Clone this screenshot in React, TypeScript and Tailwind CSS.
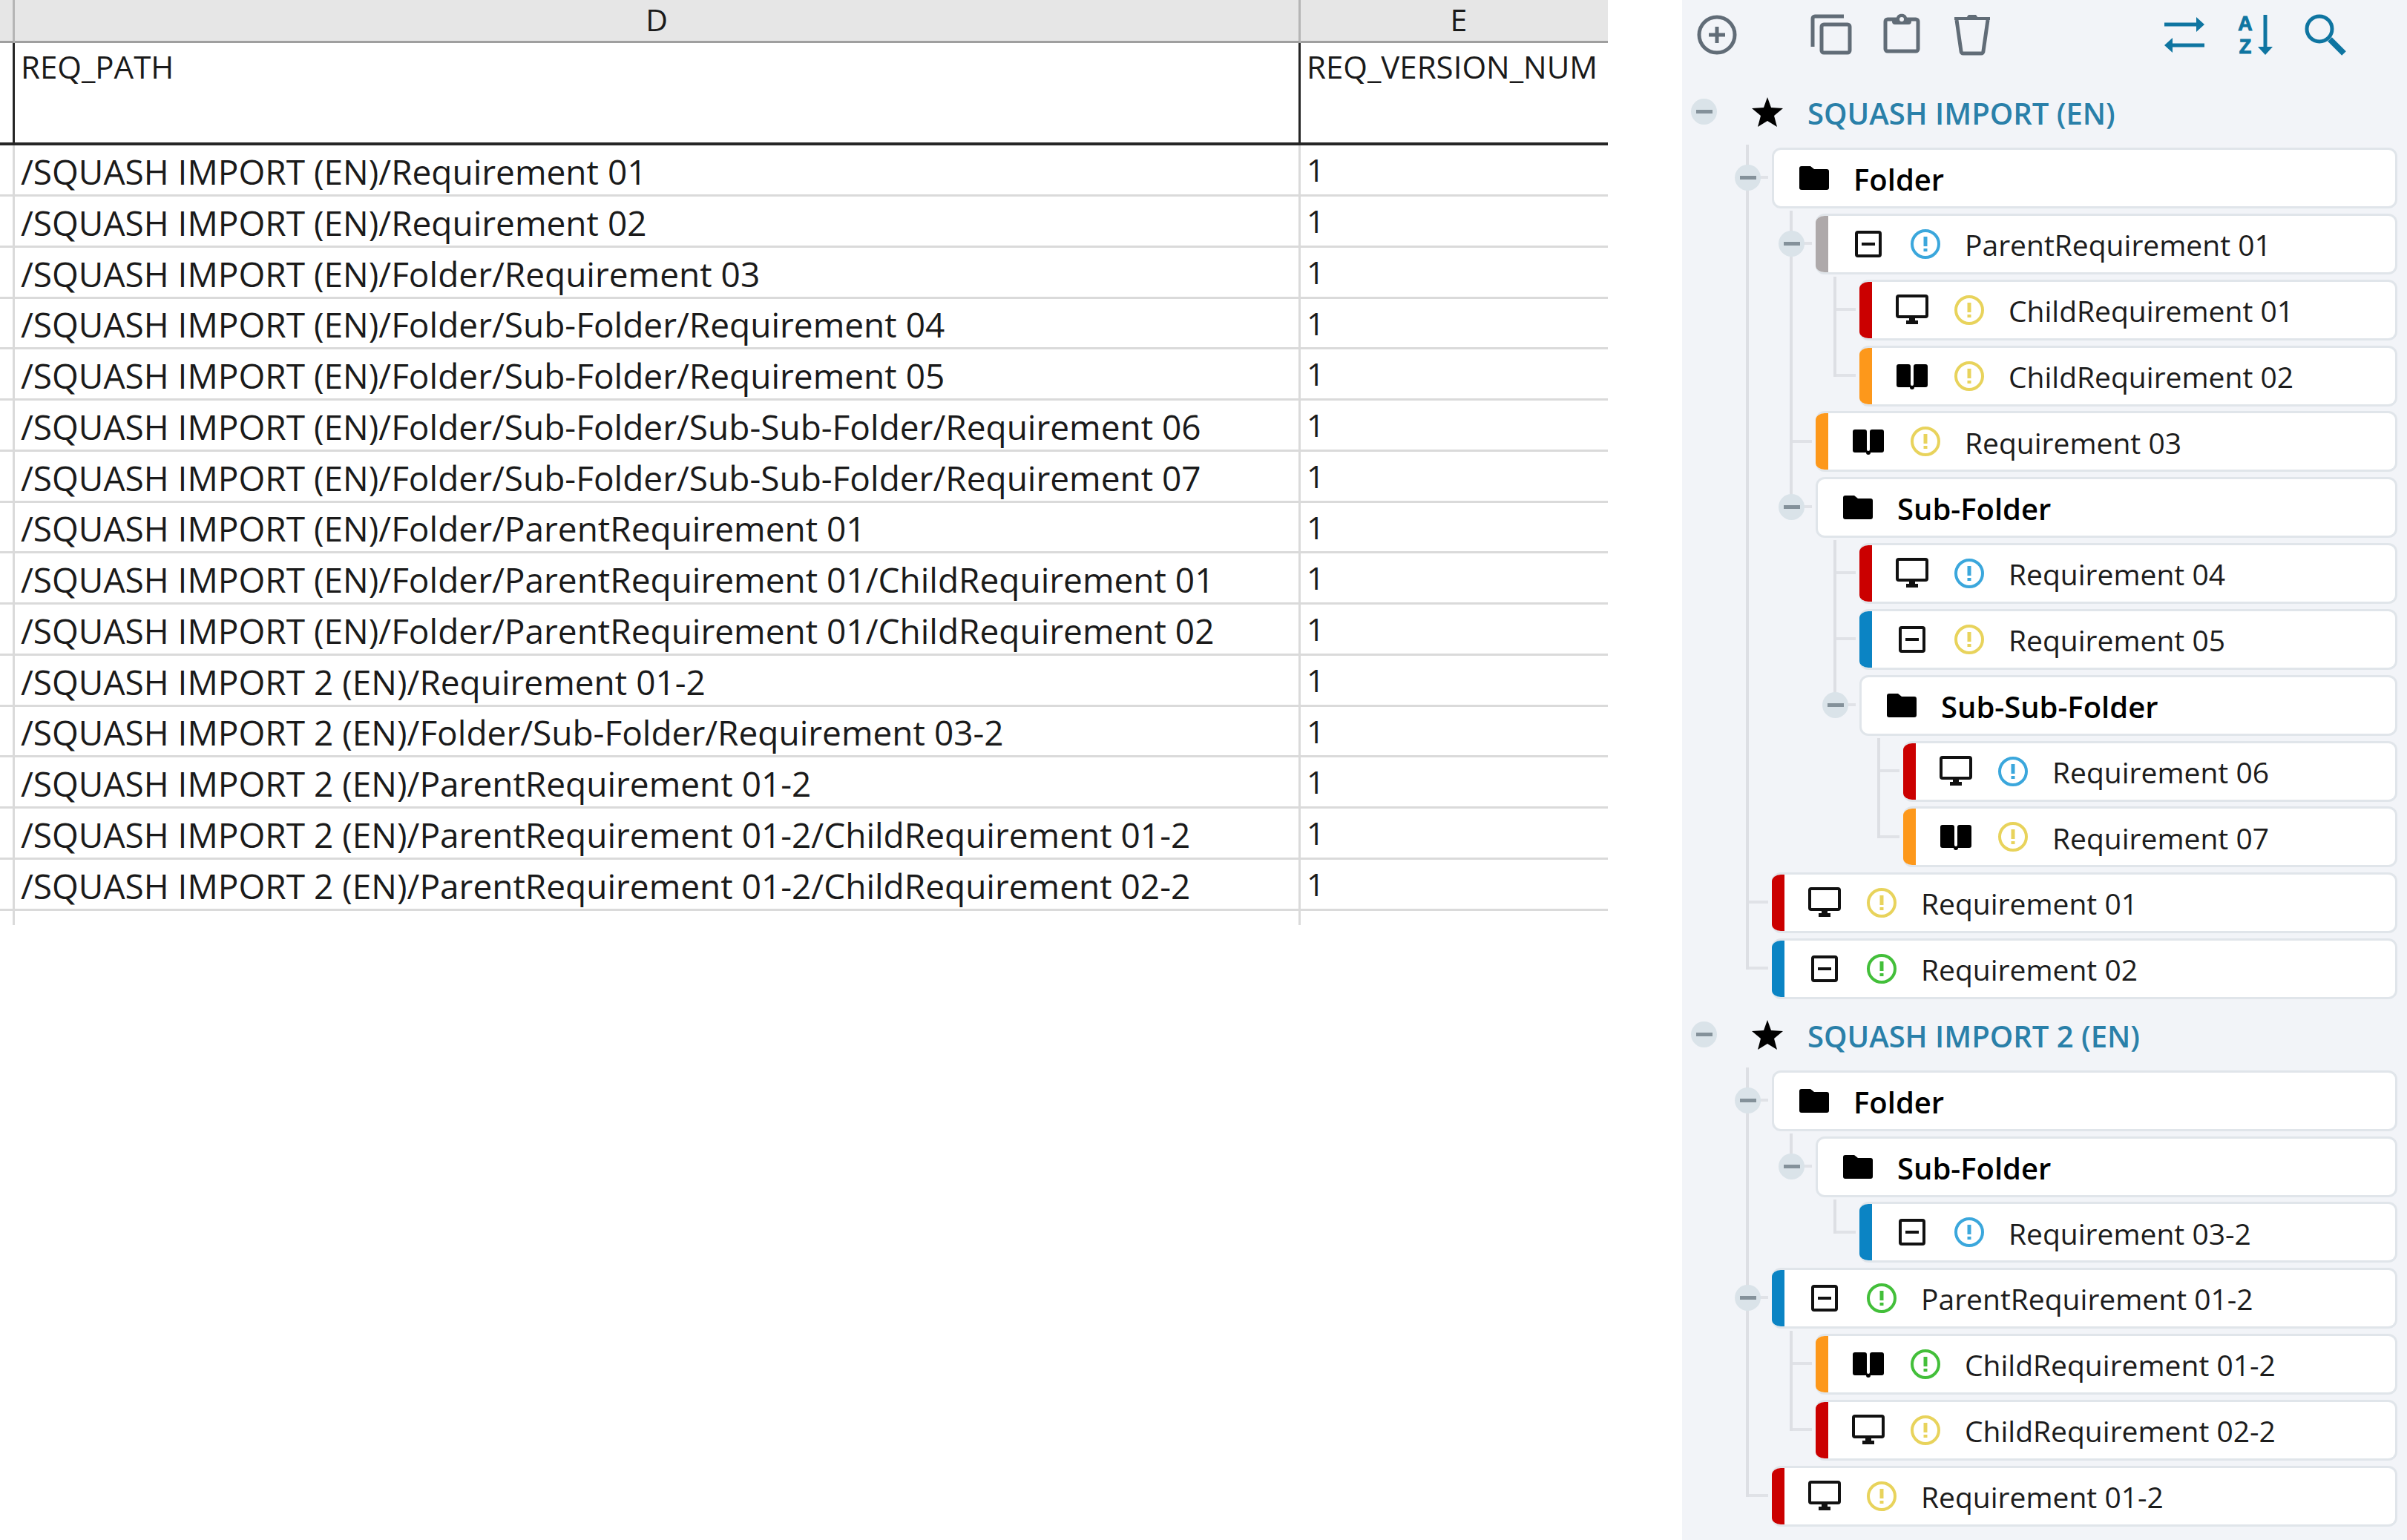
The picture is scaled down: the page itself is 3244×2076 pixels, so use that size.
import React from "react";
import clsx from "clsx";

type Kind = "folder" | "monitor" | "book" | "box";
type Criticality = "grey" | "red" | "orange" | "blue";
type Status = "cyan" | "yellow" | "green";

interface TreeNode {
  label: string;
  kind: Kind;
  bar?: Criticality;
  status?: Status;
  children?: TreeNode[];
}

interface Library {
  name: string;
  children: TreeNode[];
}

type Guide = "empty" | "line" | "tee" | "corner";

interface FlatRow {
  id: string;
  label: string;
  guides: Guide[];
  node?: TreeNode;
  open: boolean;
}

const paths = [
  "/SQUASH IMPORT (EN)/Requirement 01",
  "/SQUASH IMPORT (EN)/Requirement 02",
  "/SQUASH IMPORT (EN)/Folder/Requirement 03",
  "/SQUASH IMPORT (EN)/Folder/Sub-Folder/Requirement 04",
  "/SQUASH IMPORT (EN)/Folder/Sub-Folder/Requirement 05",
  "/SQUASH IMPORT (EN)/Folder/Sub-Folder/Sub-Sub-Folder/Requirement 06",
  "/SQUASH IMPORT (EN)/Folder/Sub-Folder/Sub-Sub-Folder/Requirement 07",
  "/SQUASH IMPORT (EN)/Folder/ParentRequirement 01",
  "/SQUASH IMPORT (EN)/Folder/ParentRequirement 01/ChildRequirement 01",
  "/SQUASH IMPORT (EN)/Folder/ParentRequirement 01/ChildRequirement 02",
  "/SQUASH IMPORT 2 (EN)/Requirement 01-2",
  "/SQUASH IMPORT 2 (EN)/Folder/Sub-Folder/Requirement 03-2",
  "/SQUASH IMPORT 2 (EN)/ParentRequirement 01-2",
  "/SQUASH IMPORT 2 (EN)/ParentRequirement 01-2/ChildRequirement 01-2",
  "/SQUASH IMPORT 2 (EN)/ParentRequirement 01-2/ChildRequirement 02-2",
];

const libraries: Library[] = [
  {
    name: "SQUASH IMPORT (EN)",
    children: [
      {
        label: "Folder",
        kind: "folder",
        children: [
          {
            label: "ParentRequirement 01",
            kind: "box",
            bar: "grey",
            status: "cyan",
            children: [
              { label: "ChildRequirement 01", kind: "monitor", bar: "red", status: "yellow" },
              { label: "ChildRequirement 02", kind: "book", bar: "orange", status: "yellow" },
            ],
          },
          { label: "Requirement 03", kind: "book", bar: "orange", status: "yellow" },
          {
            label: "Sub-Folder",
            kind: "folder",
            children: [
              { label: "Requirement 04", kind: "monitor", bar: "red", status: "cyan" },
              { label: "Requirement 05", kind: "box", bar: "blue", status: "yellow" },
              {
                label: "Sub-Sub-Folder",
                kind: "folder",
                children: [
                  { label: "Requirement 06", kind: "monitor", bar: "red", status: "cyan" },
                  { label: "Requirement 07", kind: "book", bar: "orange", status: "yellow" },
                ],
              },
            ],
          },
        ],
      },
      { label: "Requirement 01", kind: "monitor", bar: "red", status: "yellow" },
      { label: "Requirement 02", kind: "box", bar: "blue", status: "green" },
    ],
  },
  {
    name: "SQUASH IMPORT 2 (EN)",
    children: [
      {
        label: "Folder",
        kind: "folder",
        children: [
          {
            label: "Sub-Folder",
            kind: "folder",
            children: [{ label: "Requirement 03-2", kind: "box", bar: "blue", status: "cyan" }],
          },
        ],
      },
      {
        label: "ParentRequirement 01-2",
        kind: "box",
        bar: "blue",
        status: "green",
        children: [
          { label: "ChildRequirement 01-2", kind: "book", bar: "orange", status: "green" },
          { label: "ChildRequirement 02-2", kind: "monitor", bar: "red", status: "yellow" },
        ],
      },
      { label: "Requirement 01-2", kind: "monitor", bar: "red", status: "yellow" },
    ],
  },
];

const barColors: Record<Criticality, string> = {
  grey: "bg-[#aea9aa]",
  red: "bg-[#cb0000]",
  orange: "bg-[#fd981b]",
  blue: "bg-[#0b84c4]",
};

const statusColors: Record<Status, string> = {
  cyan: "text-[#3ba7dc]",
  yellow: "text-[#e8d35c]",
  green: "text-[#43bf3a]",
};

function flatten(nodes: TreeNode[], parents: Guide[], prefix: string): FlatRow[] {
  return nodes.flatMap((node, i) => {
    const last = i === nodes.length - 1;
    const id = `${prefix}/${node.label}`;
    return [
      { id, label: node.label, node, open: !!node.children, guides: [...parents, last ? "corner" : "tee"] as Guide[] },
      ...flatten(node.children ?? [], [...parents, last ? "empty" : "line"], id),
    ];
  });
}

const rows: FlatRow[] = libraries.flatMap((lib) => [
  { id: lib.name, label: lib.name, open: true, guides: ["empty"] as Guide[] },
  ...flatten(lib.children, ["empty"], lib.name),
]);

function KindIcon({ kind }: { kind: Kind }) {
  if (kind === "folder") {
    return (
      <svg viewBox="0 0 42 34" className="h-[34px] w-[42px] shrink-0" fill="#000">
        <path d="M4 1h12l5 4h17a3 3 0 0 1 3 3v22a3 3 0 0 1-3 3H4a3 3 0 0 1-3-3V4a3 3 0 0 1 3-3z" />
      </svg>
    );
  }
  return (
    <svg viewBox="0 0 48 48" className="h-12 w-12 shrink-0" fill="none" stroke="#111" strokeWidth="4">
      {kind === "monitor" && (
        <>
          <rect x="4" y="5" width="40" height="28" rx="2" />
          <path d="M20 34h8v4h4v5H16v-5h4z" fill="#111" stroke="none" />
        </>
      )}
      {kind === "box" && (
        <>
          <rect x="8" y="8" width="32" height="32" rx="2" />
          <path d="M15 24h18" />
        </>
      )}
      {kind === "book" && (
        <path
          d="M6 8h13a3 3 0 0 1 3 3v24a2 2 0 0 0 4 0V11a3 3 0 0 1 3-3h13a3 3 0 0 1 3 3v25a3 3 0 0 1-3 3H27a3 3 0 0 1-6 0H6a3 3 0 0 1-3-3V11a3 3 0 0 1 3-3z"
          fill="#000"
          stroke="none"
        />
      )}
    </svg>
  );
}

function StatusIcon({ status }: { status: Status }) {
  return (
    <svg viewBox="0 0 42 42" className={clsx("size-[42px] shrink-0", statusColors[status])} fill="none" stroke="currentColor">
      <circle cx="21" cy="21" r="18" strokeWidth="4" />
      <path d="M21 11v13M21 27v4" strokeWidth="5" />
    </svg>
  );
}

function ToolButton({ label, className, children }: { label: string; className?: string; children: React.ReactNode }) {
  return (
    <button aria-label={label} className={clsx("shrink-0", className)}>
      <svg viewBox="0 0 56 56" className="size-14 overflow-visible" fill="none" stroke="currentColor" strokeWidth="5">
        {children}
      </svg>
    </button>
  );
}

function Toolbar() {
  return (
    <div className="flex h-[106px] items-start pt-[19px] pr-[82px] pl-[19px] text-[#616c77]">
      <ToolButton label="Add">
        <circle cx="28" cy="28" r="24" />
        <path d="M28 17v22M17 28h22" />
      </ToolButton>
      <ToolButton label="Copy" className="ml-[98px]">
        <path d="M3 44V6a3 3 0 0 1 3-3h39" />
        <rect x="15" y="14" width="38" height="38" rx="3" />
      </ToolButton>
      <ToolButton label="Paste" className="ml-[39px]">
        <rect x="6" y="7" width="44" height="43" rx="3" />
        <path d="M15 5h6c1-7 13-7 14 0h6v5a4 4 0 0 1-4 4H19a4 4 0 0 1-4-4z" fill="currentColor" stroke="none" />
        <circle cx="28" cy="7" r="3" fill="#f2f4f8" stroke="none" />
      </ToolButton>
      <ToolButton label="Delete" className="ml-[39px]">
        <path d="M4 6h48" strokeWidth="4" />
        <path d="M20 5l3-4h10l3 4z" fill="currentColor" stroke="none" />
        <path d="M7 8l6 42a3 3 0 0 0 3 3h24a3 3 0 0 0 3-3l6-42" />
      </ToolButton>
      <div className="ml-auto flex gap-[39px] text-[#0f75a1]">
        <ToolButton label="Transfer">
          <path d="M1 14h46M9 42h46" />
          <path d="M44 4l11 10-11 10zM12 32L1 42l11 10z" fill="currentColor" stroke="none" />
        </ToolButton>
        <ToolButton label="Sort">
          <g
            fill="currentColor"
            stroke="currentColor"
            strokeWidth="1"
            fontFamily="Liberation Sans, sans-serif"
            fontSize="27"
            fontWeight="700"
            textAnchor="middle"
          >
            <text x="15" y="22">A</text>
            <text x="15" y="53">Z</text>
          </g>
          <path d="M42 1v46" />
          <path d="M32 44h20l-10 11z" fill="currentColor" stroke="none" />
        </ToolButton>
        <ToolButton label="Search">
          <circle cx="20" cy="20" r="17" />
          <path d="M34 34l19 19" strokeWidth="8" />
        </ToolButton>
      </div>
    </div>
  );
}

function GuideCell({ guide, toggle }: { guide: Guide; toggle: boolean }) {
  return (
    <div className="relative flex w-[59px] shrink-0">
      {guide !== "empty" && (
        <div className={clsx("w-[31px] border-r-4 border-[#dddfe4]", guide === "corner" ? "h-[46px]" : "h-full")} />
      )}
      {(guide === "tee" || guide === "corner") && <div className="h-[46px] w-[26px] border-b-4 border-[#e0e2e7]" />}
      {toggle && (
        <button
          aria-label="Collapse"
          className="absolute inset-0 m-auto flex size-[35px] items-center justify-center rounded-full bg-[#dae3e9]"
        >
          <span className="h-[5px] w-[22px] bg-[#84919a]" />
        </button>
      )}
    </div>
  );
}

function TreeRow({ row }: { row: FlatRow }) {
  const { node, guides, open, label } = row;
  return (
    <li className="flex h-[89px] nth-[6n]:h-[88px]">
      {guides.map((g, i) => (
        <GuideCell key={i} guide={g} toggle={open && i === guides.length - 1} />
      ))}
      {!node && (
        <div className="flex items-center pl-[35px]">
          <svg viewBox="0 0 42 40" className="h-10 w-[42px]" fill="#000">
            <path d="M21 0l5 14 16 1-12 10 4 15-13-8-13 8 4-15L0 15l16-1z" />
          </svg>
          <a href="#" className="pt-1 pl-[33px] text-[40px] font-semibold whitespace-nowrap text-[#2a80a9]">{label}</a>
        </div>
      )}
      {node && (
        <div
          className={clsx(
            "my-auto mr-[13px] ml-[3px] flex h-[82px] flex-1 items-center overflow-hidden rounded-[12px] border-3 border-[#e0e5ea] bg-white",
            node.bar && "border-l-0"
          )}
        >
          {node.bar ? (
            <>
              <div className={clsx("h-full w-[17px] shrink-0", barColors[node.bar])} />
              <div className="flex items-center gap-8 pl-[30px]">
                <KindIcon kind={node.kind} />
                {node.status && <StatusIcon status={node.status} />}
                <span className="pt-1 text-[39px] whitespace-nowrap text-[#1c1c1c]">{label}</span>
              </div>
            </>
          ) : (
            <div className="flex items-center gap-8 pl-[33px]">
              <KindIcon kind="folder" />
              <span className="pt-1 text-[40px] font-semibold whitespace-nowrap text-black">{label}</span>
            </div>
          )}
        </div>
      )}
    </li>
  );
}

function PathTable() {
  return (
    <table className="w-full table-fixed border-separate border-spacing-0 text-left text-[#1a1a1a]">
      <colgroup>
        <col className="w-[20px]" />
        <col />
        <col className="w-[414px]" />
      </colgroup>
      <thead>
        <tr className="h-[58px] bg-[#e6e6e6] text-center text-[41px] leading-[48px] *:border-b-3 *:border-b-[#9f9f9f] *:p-0 *:pb-1 *:font-normal">
          <td className="border-r-3 border-r-[#b5b5b5]" />
          <th scope="col" className="border-r-3 border-r-[#b5b5b5]">D</th>
          <th scope="col"><span className="pl-3">E</span></th>
        </tr>
        <tr className="h-[138px] text-left align-top text-[42px] leading-[56px] *:border-b-4 *:border-[#262626] *:p-0 *:pt-1 *:font-normal">
          <td className="border-r-3" />
          <th scope="col" className="border-r-3"><span className="pl-2">REQ_PATH</span></th>
          <th scope="col"><span className="pl-2">REQ_VERSION_NUM</span></th>
        </tr>
      </thead>
      <tbody className="text-[46px] leading-[56px]">
        {paths.map((path) => (
          <tr key={path} className="h-[69px] *:border-b-3 *:border-[#dadada] *:p-0 nth-[4n]:h-[68px]">
            <td className="border-r-3" />
            <td className="border-r-3 whitespace-nowrap"><div className="pt-[3px] pl-2">{path}</div></td>
            <td className="text-[42px]"><div className="pl-2">1</div></td>
          </tr>
        ))}
        <tr className="h-[19px] *:border-[#dadada] *:p-0">
          <td className="border-r-3" />
          <td className="border-r-3" />
          <td />
        </tr>
      </tbody>
    </table>
  );
}

export default function App() {
  return (
    <div className="flex min-h-screen bg-white font-['Open_Sans','Noto_Sans',sans-serif]">
      <main className="min-w-0 flex-1 pr-[100px]">
        <PathTable />
      </main>
      <aside className="w-[977px] shrink-0 bg-[#f2f4f8]">
        <Toolbar />
        <ul>
          {rows.map((row) => (
            <TreeRow key={row.id} row={row} />
          ))}
        </ul>
      </aside>
    </div>
  );
}
